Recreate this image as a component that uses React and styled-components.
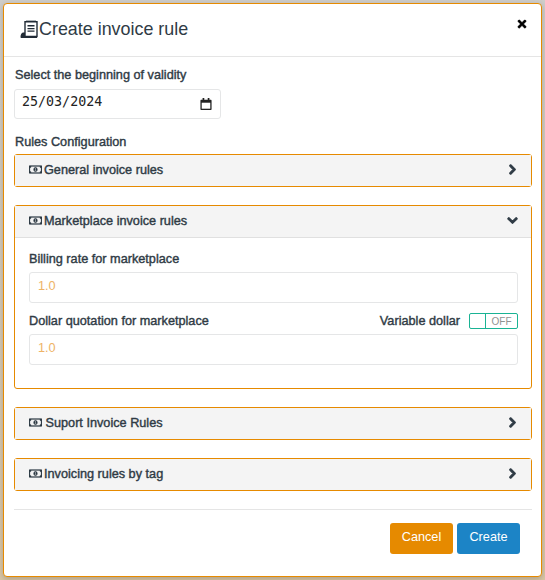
import React from 'react';
import styled, { createGlobalStyle } from 'styled-components';
import { FaChevronDown, FaChevronRight, FaRegMoneyBillAlt, FaTimes } from 'react-icons/fa';

const GlobalStyle = createGlobalStyle`
  html, body {
    margin: 0;
    padding: 0;
    height: 100%;
    overflow: hidden;
  }
  body {
    font-family: "Liberation Sans", Arial, sans-serif;
    background: linear-gradient(#cfcdc9, #d9c6a6);
  }
`;

const rules = [
  { id: 'general', title: 'General invoice rules', gap: 2 },
  { id: 'marketplace', title: 'Marketplace invoice rules', open: true, gap: 2 },
  { id: 'suport', title: 'Suport Invoice Rules', gap: 3.5 },
  { id: 'tag', title: 'Invoicing rules by tag', gap: 2 },
];

const ReceiptIcon = () => (
  <svg width="19" height="19" viewBox="0 0 19 19" aria-hidden="true">
    <path
      d="M5 1.700h12v14.800H5z M7 0.500v2 M9 0.500v2 M11 0.500v2 M13 0.500v2 M15 0.500v2"
      fill="none"
      stroke="#212b36"
      strokeWidth="1.4"
    />
    <path d="M7.500 5h7v1.500h-7z M7.500 8h7v1.300h-7z M7.500 10.500h7v1.300h-7z" fill="#212b36" />
    <path d="M3 12.500h2v4h12V18H1.500C.8 18 .5 17.500.5 17c0-2 1-4.500 2.500-4.500z" fill="#212b36" />
  </svg>
);

const App = () => {
  const renderMarketplace = () => (
    <PanelBody>
      <FieldLabel>Billing rate for marketplace</FieldLabel>
      <TextBox>1.0</TextBox>
      <LabelRow>
        <FieldLabel>Dollar quotation for marketplace</FieldLabel>
        <SwitchGroup>
          <FieldLabel>Variable dollar</FieldLabel>
          <Switch>
            <SwitchKnob />
            <SwitchText>OFF</SwitchText>
          </Switch>
        </SwitchGroup>
      </LabelRow>
      <TextBox>1.0</TextBox>
    </PanelBody>
  );

  return (
    <Backdrop>
      <GlobalStyle />
      <Modal>
        <ModalHeader>
          <ModalTitle>
            <ReceiptIcon />
            Create invoice rule
          </ModalTitle>
          <CloseButton type="button" aria-label="Close">
            <FaTimes />
          </CloseButton>
        </ModalHeader>
        <ModalBody>
          <TopLabel>Select the beginning of validity</TopLabel>
          <DateBox>
            <DateText>25/03/2024</DateText>
            <svg width="12" height="12" viewBox="0 0 14 14" aria-hidden="true">
              <path d="M3 0h2v2h4V0h2v2h1.500c.5 0 1 .5 1 1v10c0 .5-.5 1-1 1h-11c-.5 0-1-.5-1-1V3c0-.5.5-1 1-1H3z" fill="#222" />
              <path d="M2 5.500h10V12.500H2z" fill="#fff" />
            </svg>
          </DateBox>
          <SectionLabel>Rules Configuration</SectionLabel>
          {rules.map((rule) => (
            <Panel key={rule.id}>
              <PanelHeader $open={rule.open}>
                <PanelTitle $gap={rule.gap}>
                  <FaRegMoneyBillAlt />
                  {rule.title}
                </PanelTitle>
                <ChevronSlot>{rule.open ? <FaChevronDown /> : <FaChevronRight />}</ChevronSlot>
              </PanelHeader>
              {rule.open && renderMarketplace()}
            </Panel>
          ))}
          <Divider />
          <Actions>
            <ActionButton type="button" $color="#e68a00">Cancel</ActionButton>
            <ActionButton type="button" $color="#1c84c6">Create</ActionButton>
          </Actions>
        </ModalBody>
      </Modal>
    </Backdrop>
  );
};

export default App;

const Backdrop = styled.div`
  width: 545px;
  height: 580px;
  padding: 3px;
  box-sizing: border-box;
  overflow: hidden;
`;

const Modal = styled.div`
  width: 539px;
  height: 574px;
  box-sizing: border-box;
  background: #fff;
  border: 1px solid #e68a00;
  border-radius: 4px;
  box-shadow: 0 2px 6px rgba(0, 0, 0, 0.2);
`;

const ModalHeader = styled.div`
  height: 52px;
  display: flex;
  justify-content: space-between;
  padding: 0 13px 0 16px;
  border-bottom: 1px solid #e5e5e5;
`;

const ModalTitle = styled.h4`
  margin: 0;
  height: 50px;
  display: flex;
  align-items: center;
  font-size: 17.9px;
  font-weight: 400;
  color: #2f3b45;
`;

const CloseButton = styled.button`
  padding: 0;
  margin-top: 14px;
  height: 14px;
  border: 0;
  background: none;
  font-size: 12px;
  color: #000;
  svg {
    stroke: currentColor;
    stroke-width: 20;
  }
`;

const ModalBody = styled.div`
  padding: 10px 9px 0 10px;
`;

const FieldLabel = styled.div`
  font-size: 12.7px;
  line-height: 16px;
  font-weight: 400;
  -webkit-text-stroke: 0.4px #2f3b45;
  color: #2f3b45;
`;

const TopLabel = styled(FieldLabel)`
  margin-left: 1px;
`;

const SectionLabel = styled(FieldLabel)`
  margin: 15px 0 4px 1px;
`;

const DateBox = styled.div`
  width: 207px;
  height: 30px;
  margin-top: 6px;
  padding: 0 8px 0 7px;
  box-sizing: border-box;
  display: flex;
  align-items: center;
  justify-content: space-between;
  border: 1px solid #e5e6e7;
  border-radius: 3px;
`;

const DateText = styled.span`
  font-family: "DejaVu Sans Mono", monospace;
  font-size: 13.333px;
  color: #222;
  margin-top: -5px;
`;

const Panel = styled.div`
  margin-bottom: 18px;
  border: 1px solid #e68a00;
  border-radius: 3px;
`;

const PanelHeader = styled.div`
  height: ${({ $open }) => ($open ? '32px' : '31px')};
  padding: 0 13px 0 14px;
  box-sizing: border-box;
  display: flex;
  align-items: center;
  justify-content: space-between;
  background: #f4f4f4;
  border-bottom: ${({ $open }) => ($open ? '1px solid #e0e0e0' : '0')};
`;

const PanelTitle = styled.div`
  display: flex;
  align-items: center;
  gap: ${({ $gap }) => $gap}px;
  margin-top: -2px;
  font-size: 12.7px;
  -webkit-text-stroke: 0.4px #2f3b45;
  color: #2f3b45;
  svg {
    font-size: 13px;
    stroke: #2f3b45;
    stroke-width: 12;
  }
`;

const ChevronSlot = styled.span`
  display: flex;
  margin-top: -2px;
  font-size: 11px;
  color: #2f3b45;
  svg {
    stroke: currentColor;
    stroke-width: 50;
  }
`;

const PanelBody = styled.div`
  padding: 13px 13px 13px 14px;
`;

const TextBox = styled.div`
  height: 31px;
  margin: 5px 0 10px;
  padding: 0 8px 3px;
  box-sizing: border-box;
  display: flex;
  align-items: center;
  border: 1px solid #e5e6e7;
  border-radius: 3px;
  font-size: 12.7px;
  color: #eeb366;
`;

const LabelRow = styled.div`
  display: flex;
  justify-content: space-between;
  align-items: center;
`;

const SwitchGroup = styled.div`
  display: flex;
  align-items: center;
  gap: 9px;
`;

const Switch = styled.div`
  width: 49px;
  height: 16px;
  box-sizing: border-box;
  display: flex;
  align-items: center;
  border: 1px solid #1ab394;
  border-radius: 2px;
`;

const SwitchKnob = styled.span`
  width: 15px;
  height: 100%;
  border-right: 1px solid #1ab394;
`;

const SwitchText = styled.span`
  flex: 1;
  text-align: center;
  font-size: 10px;
  color: #919191;
`;

const Divider = styled.div`
  height: 1px;
  background: #e5e5e5;
`;

const Actions = styled.div`
  display: flex;
  justify-content: flex-end;
  gap: 4px;
  margin: 13px 12px 0 0;
`;

const ActionButton = styled.button`
  height: 31px;
  width: 63px;
  padding: 0 0 3px;
  border: 0;
  border-radius: 3px;
  background: ${({ $color }) => $color};
  color: #fff;
  font-family: inherit;
  font-size: 12.7px;
`;
